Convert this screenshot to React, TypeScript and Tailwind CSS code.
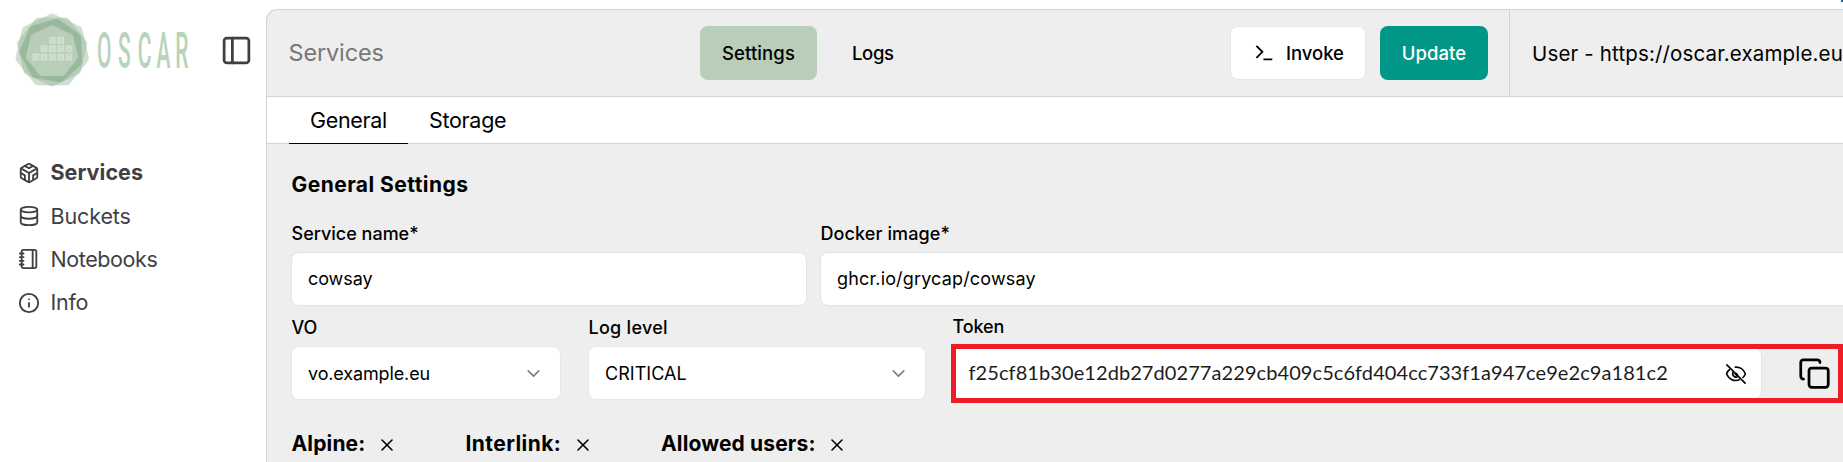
import React from "react";
import { ChevronDown, Codesandbox, Copy, Database, Info, Notebook, PanelLeft, X } from "lucide-react";

function heptagon(cx: number, cy: number, r: number, deg: number) {
  return Array.from({ length: 7 }, (_, i) => {
    const a = ((deg + (i * 360) / 7 - 90) * Math.PI) / 180;
    return `${(cx + r * Math.cos(a)).toFixed(2)},${(cy + r * Math.sin(a)).toFixed(2)}`;
  }).join(" ");
}

const blocks = [
  [49, 37], [57.3, 37],
  [40.7, 45.3], [49, 45.3], [57.3, 45.3], [65.6, 45.3],
  [32.4, 53.7], [40.7, 53.7], [49, 53.7], [57.3, 53.7], [65.6, 53.7],
];

function Logo() {
  return (
    <svg width="200" height="100" viewBox="0 0 200 100" className="shrink-0">
      <g strokeLinejoin="round" strokeWidth="8">
        <g opacity="0.65">
          <polygon points={heptagon(52.2, 51, 33.5, 0)} fill="#b8ceb9" stroke="#b8ceb9" />
        </g>
        <g opacity="0.6">
          <polygon points={heptagon(52.2, 50.5, 31.8, 180)} fill="#a5c2a7" stroke="#a5c2a7" />
        </g>
        <polygon points={heptagon(52, 51, 28.5, 10)} fill="#9ab99c" stroke="#9ab99c" />
        <polygon points={heptagon(52, 51.8, 22.5, 0)} fill="#b8ceb9" stroke="#b8ceb9" />
      </g>
      {blocks.map(([x, y], i) => (
        <g key={i}>
          <rect x={x} y={y} width="6.8" height="6.8" fill="#d0e0d1" />
          {i % 2 ? (
            <path d={`M${x + 2.2} ${y + 1.4}l2.6 4M${x + 3.4} ${y + 3.2}l-1.4 2.2`} stroke="#b8ceb9" strokeWidth="0.8" fill="none" />
          ) : (
            <rect x={x + 1.8} y={y + 1.8} width="3.2" height="3.2" fill="none" stroke="#c1d5c2" strokeWidth="0.7" />
          )}
        </g>
      ))}
      <text
        transform="scale(0.42 1)"
        x="231 281 328 372.4 417.4"
        y="67.8"
        fill="#b7d3b9"
        className="font-['Roboto',sans-serif] text-[50px] font-medium"
      >
        OSCAR
      </text>
    </svg>
  );
}

function TerminalIcon() {
  return (
    <svg width="18" height="18" viewBox="0 0 18 18" fill="none" stroke="#000" strokeWidth="1.8" className="shrink-0">
      <path d="M1.4 1.8 7.4 7.8 1.4 13.8M8.4 15.3H17.3" />
    </svg>
  );
}

function EyeOffIcon() {
  return (
    <svg width="22" height="22" viewBox="0 0 22 22" fill="none" stroke="#000" strokeWidth="1.6" className="shrink-0">
      <path d="M1.4 1.4 20.6 20.6" />
      <path d="M9.6 4.2C15 3.4 19 6.8 20.4 10.8c-.6 1.7-1.6 3.1-2.9 4.2" />
      <path d="M5.2 6C3.5 7.200 2.200 8.900 1.600 10.800 3.600 16.200 9.400 19.200 15 16.400" />
      <path d="M8.300 9A3.300 3.300 0 0 0 12.800 13.600" />
      <path d="M10.400 10.400 12.400 12.400" strokeWidth="2.600" />
    </svg>
  );
}

const label = "flex h-full items-center whitespace-nowrap pl-[0.5px] text-[18px] font-medium";
const field = "flex h-[54px] items-center rounded-[8px] border bg-white px-[16px] text-[18px]";

function Toggle({ title, className }: { title: string; className: string }) {
  return (
    <div className={className}>
      <span>{title}</span>
      <X size={20} strokeWidth={1.9} className="mt-[2px] shrink-0" />
    </div>
  );
}

export default function App() {
  return (
    <div className="relative flex h-[462px] w-[1843px] overflow-hidden bg-white font-['Inter','Liberation_Sans',sans-serif] text-black">
      <aside className="flex w-[266px] shrink-0 flex-col text-[#3f3f46]">
        <div className="flex h-[100px] items-center">
          <Logo />
          <PanelLeft size={33} className="ml-[20px] shrink-0" />
        </div>
        <nav className="mt-[51px] flex flex-col pl-[18px] text-[21.5px]">
          <a className="flex h-[43.3px] items-center gap-[10.500px] font-bold tracking-[0.04px]">
            <Codesandbox size={22} className="shrink-0" />
            <span className="-mt-[2px]">Services</span>
          </a>
          <a className="flex h-[43.3px] items-center gap-[10.500px] tracking-[-0.12px]">
            <Database size={22} className="shrink-0" />
            Buckets
          </a>
          <a className="flex h-[43.3px] items-center gap-[10.500px] tracking-[-0.4px]">
            <Notebook size={22} className="shrink-0" />
            Notebooks
          </a>
          <a className="flex h-[43.3px] items-center gap-[10.500px] tracking-[-0.27px]">
            <Info size={22} className="shrink-0" />
            Info
          </a>
        </nav>
      </aside>

      <main className="mt-[9px] flex min-w-0 flex-1 flex-col overflow-hidden rounded-tl-[11px] border-t border-l border-[#d4d4d4] bg-[#eeeeee]">
        <header className="flex h-[87px] shrink-0 items-center border-b border-[#d4d4d4] text-[18.5px] font-medium">
          <h1 className="w-[433px] shrink-0 pl-[21.500px] text-[23.5px] font-normal tracking-[-0.145px] text-[#777777]">Services</h1>
          <div className="flex h-[54px] w-[117px] shrink-0 items-center justify-center rounded-[8px] bg-[#b8ceb9] pt-[2px] tracking-[0.12px]">Settings</div>
          <div className="ml-[34px] w-[379px] shrink-0 pt-[2px] pl-[1px] tracking-[-0.36px]">Logs</div>
          <div className="flex h-[54px] w-[136px] shrink-0 items-center rounded-[8px] border border-[#e2e8f0] bg-white pl-[24px] tracking-[-0.05px]">
            <TerminalIcon />
            <span className="ml-[13px] pt-[2px]">Invoke</span>
          </div>
          <div className="ml-[14px] flex h-[54px] w-[108px] shrink-0 items-center justify-center rounded-[8px] bg-[#009688] pt-[2px] tracking-[0.04px] text-white">Update</div>
          <div className="ml-[21px] flex h-full flex-1 items-center border-l border-[#d4d4d4] pt-[2px] pl-[22px] text-[20.5px] font-normal tracking-[0.15px] whitespace-nowrap">
            User - https://oscar.example.eu
          </div>
        </header>

        <div className="flex h-[47px] shrink-0 bg-white pl-[22px] text-[21.5px] shadow-[inset_0_-1px_0_#d4d4d4]">
          <div className="flex w-[119px] items-center border-b border-black pl-[21px] tracking-[-0.33px]">General</div>
          <div className="flex items-center border-b border-transparent pl-[21px] tracking-[-0.31px]">Storage</div>
        </div>

        <section className="flex flex-col pt-[26px] pl-[24px]">
          <h2 className="flex h-[30px] items-center pl-[0.5px] text-[21px] font-bold tracking-[0.45px]">General Settings</h2>

          <div className="mt-[15px] flex">
            <div className="w-[516px] shrink-0">
              <div className="h-[37px]"><div className={label}>Service name*</div></div>
              <div className={`${field} border-[#e4e4e7] pb-[2px] tracking-[-0.065px]`}>cowsay</div>
            </div>
            <div className="ml-[13px] w-[1100px] shrink-0">
              <div className="h-[37px]"><div className={`${label} tracking-[0.1px]`}>Docker image*</div></div>
              <div className={`${field} border-[#e4e4e7] pb-[2px] tracking-[0.165px]`}>ghcr.io/grycap/cowsay</div>
            </div>
          </div>

          <div className="flex">
            <div className="w-[270px] shrink-0">
              <div className="h-[40px] pt-[2px]"><div className={`${label} tracking-[-0.12px]`}>VO</div></div>
              <div className={`${field} justify-between border-[#e2e8f0] tracking-[-0.13px]`}>
                vo.example.eu
                <ChevronDown size={21} className="text-[#808080]" />
              </div>
            </div>
            <div className="ml-[27px] w-[338px] shrink-0">
              <div className="h-[40px] pt-[2px]"><div className={`${label} tracking-[0.27px]`}>Log level</div></div>
              <div className={`${field} justify-between border-[#e2e8f0] tracking-[0.04px]`}>
                CRITICAL
                <ChevronDown size={21} className="text-[#808080]" />
              </div>
            </div>
            <div className="ml-[25px] w-[892px] shrink-0">
              <div className="h-[38px] pt-[3px] pl-[1px]"><div className={`${label} tracking-[-0.11px]`}>Token</div></div>
              <div className="flex h-[59px] items-stretch border-[5px] border-[#ee1c25]">
                <div className="flex w-[806px] shrink-0 items-center justify-between rounded-r-[7px] border-r border-[#e4e4e7] bg-white pr-[14px] pl-[12.500px]">
                  <span className="pb-[3px] font-['Lato',sans-serif] text-[20px] tracking-[0.077px] text-[#1c1c1c]">
                    f25cf81b30e12db27d0277a229cb409c5c6fd404cc733f1a947ce9e2c9a181c2
                  </span>
                  <EyeOffIcon />
                </div>
                <div className="flex flex-1 items-center justify-end pr-[7px]">
                  <Copy size={33} />
                </div>
              </div>
            </div>
          </div>

          <div className="mt-[21px] flex h-[40px] items-center pl-[0.5px] text-[21px] font-bold whitespace-nowrap">
            <Toggle title="Alpine:" className="flex w-[174px] items-center gap-[11.500px] tracking-[0.15px]" />
            <Toggle title="Interlink:" className="flex w-[195.500px] items-center gap-[11.500px] tracking-[0.43px]" />
            <Toggle title="Allowed users:" className="flex items-center gap-[11.500px] tracking-[0.14px]" />
          </div>
        </section>
      </main>
      <span className="absolute top-0 right-0 h-[2px] w-[2px] bg-[#2f6690]" />
    </div>
  );
}
